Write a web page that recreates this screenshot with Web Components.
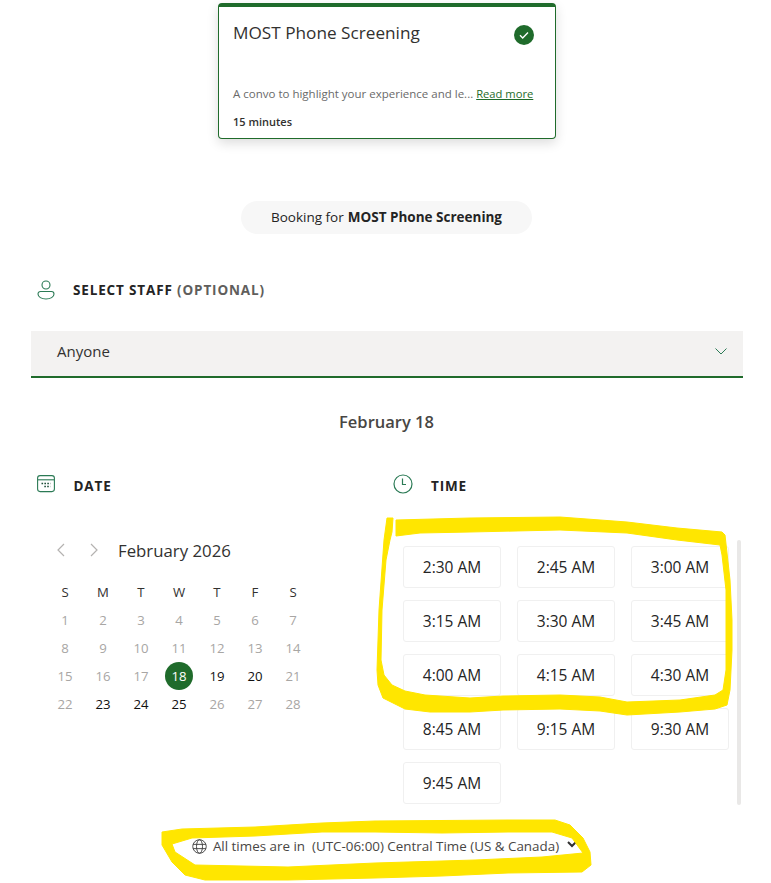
<!DOCTYPE html>
<html lang="en">
<head>
<meta charset="UTF-8">
<title>MOST Phone Screening</title>
<style>
    html, body { margin: 0; background: #fff; }
    body { font-family: "Open Sans", "Noto Sans", sans-serif; color: #242424; width: 771px; height: 883px; overflow: hidden; position: relative; }
</style>
</head>
<body>
<booking-page>
    <service-card slot="card" title-text="MOST Phone Screening" minutes="15 minutes">A convo to highlight your experience and le...</service-card>
    <booking-pill slot="pill" service="MOST Phone Screening"></booking-pill>
    <staff-select slot="staff" value="Anyone"></staff-select>
    <month-calendar slot="date"></month-calendar>
    <time-grid slot="time"></time-grid>
    <timezone-note slot="zone"></timezone-note>
</booking-page>
<marker-scribble></marker-scribble>

<script>
    const GREEN = '#1f6b2b';

    class ServiceCard extends HTMLElement {
        constructor() {
            super();
            this.attachShadow({mode: 'open'});
            this.shadowRoot.innerHTML = `
                <style>
                    :host { display: block; box-sizing: border-box; width: 338px; height: 136px; margin: 3px auto 0; position: relative; left: 1.5px;
                        background: #fff; border: 1px solid ${GREEN}; border-top: 4px solid ${GREEN}; border-radius: 4px;
                        box-shadow: 0 4px 12px rgba(0,0,0,.14); padding: 14px 14px 0; }
                    .top { display: flex; justify-content: space-between; height: 53px; }
                    h2 { margin: 0; font-size: 17.2px; font-weight: 400; line-height: 24px; color: #323130; }
                    svg { margin: 4px 7px 0 0; }
                    p { margin: 12px 0 0; font-size: 11.5px; line-height: 16px; color: #6a6a6a; white-space: nowrap; }
                    a { color: ${GREEN}; text-decoration: underline; font-size: 11.2px; }
                    .mins { margin-top: 12px; font-size: 11px; line-height: 16px; font-weight: 600; color: #323130; }
                </style>
                <div class="top">
                    <h2>${this.getAttribute('title-text')}</h2>
                    <svg width="20" height="20" viewBox="0 0 20 20"><circle cx="10" cy="10" r="10" fill="${GREEN}"/><path d="M6 10.3l2.7 2.6L14 7.6" fill="none" stroke="#fff" stroke-width="1.4"/></svg>
                </div>
                <p><slot></slot> <a>Read more</a></p>
                <div class="mins">${this.getAttribute('minutes')}</div>`;
        }
    }

    class BookingPill extends HTMLElement {
        constructor() {
            super();
            this.attachShadow({mode: 'open'});
            this.shadowRoot.innerHTML = `
                <style>
                    :host { display: flex; width: 291px; height: 33px; margin: 0 auto; position: relative; left: 1px; align-items: center; justify-content: center;
                        border-radius: 17px; background: #f7f7f7; font-size: 13.5px; color: #242424; white-space: nowrap; }
                    b { font-weight: 700; margin-left: 4px; }
                    span, b { position: relative; top: -1px; }
                </style>
                <span>Booking for</span><b>${this.getAttribute('service')}</b>`;
        }
    }

    const ICONS = {
        person: `<svg width="18" height="20" viewBox="0 0 18 20" fill="none" stroke="#2b7a55" stroke-width="1.1"><circle cx="9" cy="5" r="4"/><path d="M3.5 11.5h11a2.5 2.5 0 0 1 2.5 2.5c0 3-3.5 5-8 5s-8-2-8-5a2.5 2.5 0 0 1 2.5-2.5z"/></svg>`,
        calendar: `<svg width="18" height="18" viewBox="0 0 18 18" fill="none" stroke="#2b7a55" stroke-width="1.1"><rect x=".6" y=".6" width="16.8" height="16" rx="2.5"/><path d="M1 4.8h16"/><path stroke="#1f4f3a" stroke-width="1.6" stroke-dasharray="1.6 1.3" d="M4.5 8.5h9M7.3 11.5h6"/></svg>`,
        clock: `<svg width="20" height="20" viewBox="0 0 20 20" fill="none" stroke="#2b7a55" stroke-width="1.2"><circle cx="10" cy="10" r="9"/><path d="M9.5 4.5v6h3.5"/></svg>`
    };

    class SectionHeading extends HTMLElement {
        constructor() {
            super();
            this.attachShadow({mode: 'open'});
            this.shadowRoot.innerHTML = `
                <style>
                    :host { display: flex; align-items: center; height: 22px; font-size: 13.5px; font-weight: 700; letter-spacing: .85px; color: #242424; white-space: nowrap; }
                    .icon { display: flex; width: var(--icon-width, 36px); margin-top: var(--icon-shift, 0); }
                    ::slotted(span) { color: #605e5c; }
                </style>
                <span class="icon">${ICONS[this.getAttribute('icon')]}</span>
                <span>${this.getAttribute('label')}</span>&nbsp;<slot></slot>`;
        }
    }

    class StaffSelect extends HTMLElement {
        constructor() {
            super();
            this.attachShadow({mode: 'open'});
            this.shadowRoot.innerHTML = `
                <style>
                    :host { display: flex; box-sizing: border-box; height: 47px; align-items: center; justify-content: space-between;
                        padding: 0 16px 6px 26px; background: #f3f2f1; border-bottom: 2px solid ${GREEN}; font-size: 15px; color: #323130; }
                    svg { margin-top: 2px; }
                </style>
                <span>${this.getAttribute('value')}</span>
                <svg width="12" height="7" viewBox="0 0 12 7" fill="none" stroke="#2b7a55" stroke-width="1"><path d="M.5.5l5.5 5.5L11.5.5"/></svg>`;
        }
    }

    class MonthCalendar extends HTMLElement {
        constructor() {
            super();
            this.attachShadow({mode: 'open'});
            const heads = ['S', 'M', 'T', 'W', 'T', 'F', 'S'].map(d => `<span class="head">${d}</span>`).join('');
            let days = '';
            for (let d = 1; d <= 28; d++) {
                const cls = d === 18 ? 'today' : [19, 20, 23, 24, 25].includes(d) ? 'open' : 'off';
                days += `<span class="${cls}">${d}</span>`;
            }
            this.shadowRoot.innerHTML = `
                <style>
                    :host { display: block; padding-left: 15px; }
                    .nav { display: flex; align-items: center; height: 26px; padding-left: 10px; }
                    .nav svg { margin-right: 25px; }
                    .nav svg:nth-child(2) { margin-right: 19px; }
                    .month { font-size: 16.8px; color: #323130; white-space: nowrap; }
                    .grid { display: grid; grid-template-columns: repeat(7, 38px); grid-auto-rows: 28px; margin-top: 15px; font-size: 13.2px; text-align: center; align-items: center; justify-items: center; }
                    .head { color: #323130; }
                    .off { color: #a8a6a4; }
                    .open { color: #111; }
                    .today { width: 28px; height: 28px; line-height: 28px; border-radius: 50%; background: ${GREEN}; color: #fff; }
                </style>
                <div class="nav">
                    <svg width="9" height="14" viewBox="0 0 9 14" fill="none" stroke="#b4b2b0" stroke-width="1.2"><path d="M8 1L2 7l6 6"/></svg>
                    <svg width="9" height="14" viewBox="0 0 9 14" fill="none" stroke="#b4b2b0" stroke-width="1.2"><path d="M1 1l6 6-6 6"/></svg>
                    <span class="month">February 2026</span>
                </div>
                <div class="grid">${heads}${days}</div>`;
        }
    }

    class TimeSlot extends HTMLElement {
        constructor() {
            super();
            this.attachShadow({mode: 'open'});
            this.shadowRoot.innerHTML = `
                <style>
                    :host { display: flex; box-sizing: border-box; height: 42px; align-items: center; justify-content: center;
                        border: 1px solid #f0f0f0; border-radius: 3px; background: #fff; font-size: 15.5px; color: #242424; white-space: nowrap; }
                </style>
                <slot></slot>`;
        }
    }

    class TimeGrid extends HTMLElement {
        constructor() {
            super();
            this.attachShadow({mode: 'open'});
            const times = ['2:30 AM', '2:45 AM', '3:00 AM', '3:15 AM', '3:30 AM', '3:45 AM', '4:00 AM', '4:15 AM', '4:30 AM', '8:45 AM', '9:15 AM', '9:30 AM', '9:45 AM'];
            this.shadowRoot.innerHTML = `
                <style>
                    :host { display: flex; justify-content: space-between; align-items: flex-start; }
                    .slots { display: grid; grid-template-columns: repeat(3, 98px); gap: 12px 16px; padding: 6px 0 0 10px; }
                    .thumb { width: 4px; height: 265px; border-radius: 2px; background: #e9e8e7; margin-right: 2px; }
                </style>
                <div class="slots">${times.map(t => `<time-slot>${t}</time-slot>`).join('')}</div>
                <div class="thumb"></div>`;
        }
    }

    class TimezoneNote extends HTMLElement {
        constructor() {
            super();
            this.attachShadow({mode: 'open'});
            this.shadowRoot.innerHTML = `
                <style>
                    :host { display: flex; align-items: center; justify-content: center; height: 20px; font-size: 13.4px; color: #484644; white-space: pre; position: relative; left: -1px; }
                    svg.globe { margin-right: 6px; }
                    svg.chev { margin: -3px 0 0 8px; }
                </style>
                <svg class="globe" width="15" height="15" viewBox="0 0 14 14" fill="none" stroke="#444" stroke-width=".9"><circle cx="7" cy="7" r="6.3"/><ellipse cx="7" cy="7" rx="2.8" ry="6.3"/><path d="M1 5h12M1 9h12"/></svg>
                <span>All times are in  (UTC-06:00) Central Time (US &amp; Canada)</span>
                <svg class="chev" width="10" height="7" viewBox="0 0 10 7" fill="none" stroke="#323130" stroke-width="2"><path d="M1 1l4 4 4-4"/></svg>`;
        }
    }

    class BookingPage extends HTMLElement {
        constructor() {
            super();
            this.attachShadow({mode: 'open'});
            this.shadowRoot.innerHTML = `
                <style>
                    :host { display: block; }
                    .gap { height: 62px; }
                    .staff-head { margin: 45px 0 0 37px; --icon-width: 36px; }
                    .staff-box { margin: 30px 28px 0 31px; }
                    .when { margin: 31px 0 0 2px; text-align: center; font-size: 16.5px; line-height: 26px; font-weight: 600; color: #484644; }
                    .cols { display: grid; grid-template-columns: 362px 350px; margin: 40px 0 0 31px; }
                    .date-head { margin-left: 6px; --icon-width: 36.5px; --icon-shift: -4px; }
                    .time-head { --icon-width: 38px; --icon-shift: -4px; }
                    .cal { margin-top: 40px; }
                    .times { margin-top: 43px; }
                    .zone { margin-top: 31px; }
                </style>
                <slot name="card"></slot>
                <div class="gap"></div>
                <slot name="pill"></slot>
                <section-heading class="staff-head" icon="person" label="SELECT STAFF"><span>(OPTIONAL)</span></section-heading>
                <div class="staff-box"><slot name="staff"></slot></div>
                <div class="when">February 18</div>
                <div class="cols">
                    <div>
                        <section-heading class="date-head" icon="calendar" label="DATE"></section-heading>
                        <div class="cal"><slot name="date"></slot></div>
                    </div>
                    <div>
                        <section-heading class="time-head" icon="clock" label="TIME"></section-heading>
                        <div class="times"><slot name="time"></slot></div>
                    </div>
                </div>
                <div class="zone"><slot name="zone"></slot></div>`;
        }
    }

    // yellow highlighter strokes somebody drew over the screenshot
    class MarkerScribble extends HTMLElement {
        constructor() {
            super();
            this.attachShadow({mode: 'open'});
            this.shadowRoot.innerHTML = `
                <style>
                    :host { display: block; position: absolute; left: 0; top: 0; width: 771px; height: 883px; pointer-events: none; }
                    path { fill: #ffe600; stroke: #ffe600; stroke-width: 1; stroke-linejoin: round; }
                </style>
                <svg width="771" height="883" viewBox="0 0 771 883">
                    <path d="M396 520L470 518L560 517L627 522L677 528L722 532L725 535L730 580L732 620L732 650L730 690L727 705L715 709L680 712L627 715L600 711L560 709L503 710L470 712L430 712L405 709L383 698L378 685L377 670L379 610L384 540L387 518L393 518L392 532L390 540L386 560L382 610L381 660L384 675L392 685L405 691L425 695L470 698L503 696L560 695L600 697L627 702L680 700L715 695L723 690L726 670L726 625L726 590L722 555L720 545L677 540L627 533L560 530L470 532L420 533L396 536Z"/>
                    <path fill-rule="evenodd" d="M162 832L182 829L255 827L322 823L375 821L508 820L555 820L570 825L583 838L590 852L591 865L582 872L508 873L442 876L375 878L288 880L205 880L185 875L172 862L162 845ZM172 844L175 852L195 865L288 867L375 863L408 862L475 860L542 857L583 853L572 838L552 832L508 832L442 833L375 832L322 832L255 836L192 838Z"/>
                </svg>`;
        }
    }

    customElements.define('service-card', ServiceCard);
    customElements.define('booking-pill', BookingPill);
    customElements.define('section-heading', SectionHeading);
    customElements.define('staff-select', StaffSelect);
    customElements.define('month-calendar', MonthCalendar);
    customElements.define('time-slot', TimeSlot);
    customElements.define('time-grid', TimeGrid);
    customElements.define('timezone-note', TimezoneNote);
    customElements.define('booking-page', BookingPage);
    customElements.define('marker-scribble', MarkerScribble);
</script>
</body>
</html>
